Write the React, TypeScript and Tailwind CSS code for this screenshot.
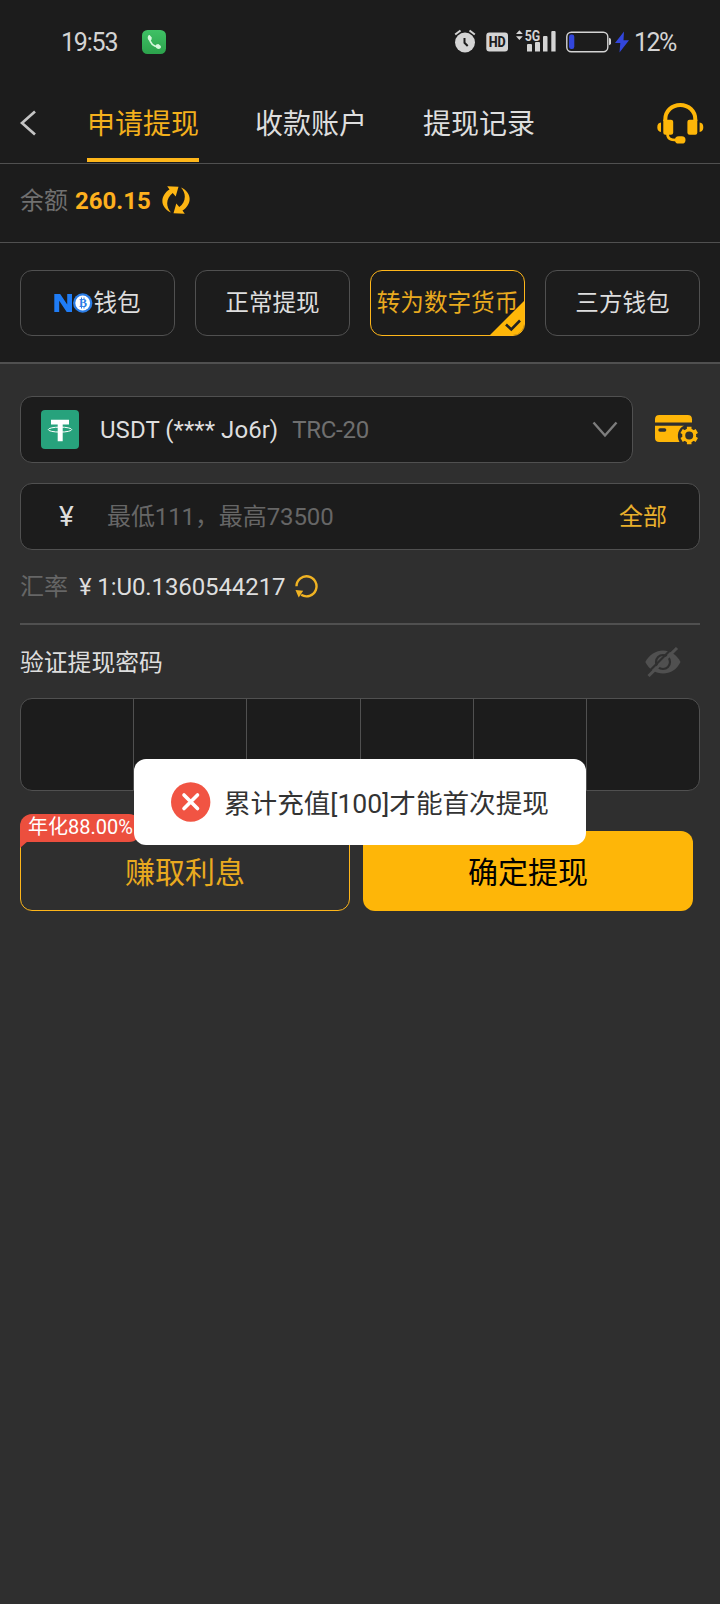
import { useState } from "react";
import clsx from "clsx";

const tabs = ["申请提现", "收款账户", "提现记录"];

const methods = [
  { id: "no", name: "钱包", logo: true },
  { id: "normal", name: "正常提现" },
  { id: "crypto", name: "转为数字货币" },
  { id: "third", name: "三方钱包" },
];

function PhoneBadge() {
  return (
    <svg width="24" height="24" viewBox="0 0 24 24" className="ml-6 mb-px">
      <defs>
        <linearGradient id="phone" x1="0" y1="0" x2="0" y2="1">
          <stop offset="0" stopColor="#3fc165" />
          <stop offset="1" stopColor="#2ca24c" />
        </linearGradient>
      </defs>
      <rect width="24" height="24" rx="5.5" fill="url(#phone)" />
      <path d="M7.5 8C8 13 11.500 16.300 16.500 16.800" stroke="#d5f7dc" strokeWidth="1.700" fill="none" />
      <path
        d="M7.800 5.200l2 2.400-.3 2.200-2.300.9c-1.400-1-1.900-3-1.100-4.600.4-.8 1.100-1.200 1.700-.9z M18.600 15.700l-2.300-1.600-2.100.5-.6 2.300c1.100 1.800 3 2.500 4.500 1.600.9-.7 1.100-2 .5-2.800z"
        fill="#d5f7dc"
      />
    </svg>
  );
}

function StatusIcons() {
  return (
    <svg width="182" height="28" viewBox="0 0 182 28" fill="#d4d4d4" className="ml-auto">
      {/* alarm */}
      <circle cx="11" cy="14.500" r="10" />
      <path d="M1.200 6.500L6.500 2.500M15.500 2.500l5.300 4" stroke="#d4d4d4" strokeWidth="2" fill="none" />
      <path d="M10.500 10v4.800l3.200 3.200" stroke="#1c1c1c" strokeWidth="2" fill="none" />
      {/* hd */}
      <rect x="32.300" y="4.500" width="21.700" height="19" rx="3" />
      <text x="43.200" y="19.300" textAnchor="middle" fontSize="15.500" fontWeight="800" fill="#1c1c1c" textLength="17" lengthAdjust="spacingAndGlyphs" className="font-['Roboto']">
        HD
      </text>
      {/* signal */}
      <path d="M62 6l3.400-3.800L68.800 6zM62 8.300l3.400 3.800 3.400-3.800z" />
      <text x="70.700" y="12.600" fontSize="15" fontWeight="700" textLength="15.500" lengthAdjust="spacingAndGlyphs" className="font-['Roboto']">
        5G
      </text>
      <path d="M73 17q0-1 1-1h3q1 0 1 1v6.500h-5zM81 15q0-1 1-1h3q1 0 1 1v8.500h-5zM89 9q0-1 1-1h2.500q1 0 1 1v14.500H89zM97.300 4q0-1 1-1h2.300q1 0 1 1v19.500h-4.300z" />
      {/* battery */}
      <rect x="112.800" y="4.300" width="41" height="19.500" rx="4.500" fill="none" stroke="#d4d4d4" strokeWidth="1.400" />
      <path d="M155 9.700q2 .5 2 2v3.600q0 1.500-2 2z" />
      <rect x="115" y="6.500" width="5.300" height="14.500" rx="2.200" fill="#3246dc" />
      <path d="M170 3.500L161 15h5.300l-.8 9.500 9.500-12.300h-5.500z" fill="#3246dc" />
    </svg>
  );
}

function HeadsetIcon() {
  return (
    <svg width="47" height="41" viewBox="0 0 47 41" fill="#feb608">
      <path d="M8.300 18v-1.500C8.300 8 15 2 23.300 2s15 6 15 14.500V18" stroke="#feb608" strokeWidth="4" fill="none" />
      <path d="M6.300 16.700H14q2.200 0 2.200 2v11q0 2-2.200 2H8.300q-2 0-2-2zM40.300 16.700h-7.700q-2.200 0-2.200 2v11q0 2 2.200 2h5.700q2 0 2-2z" />
      <path d="M4 19.500v9.400Q.3 28.500.3 24.200T4 19.500zM42.600 19.500v9.400q3.700-.4 3.700-4.700t-3.700-4.700z" />
      <path d="M10.500 30.500c0 5 2.200 6.600 9.500 6.600" stroke="#feb608" strokeWidth="2.700" fill="none" />
      <rect x="18" y="33.200" width="10.500" height="7.300" rx="3.600" />
    </svg>
  );
}

const swapArrow = "M9 26.500C-3 21-1.500 9 7.500 3.500L5.200.2l11.300.6-2.800 9.700-3-3.500C4.500 11.500 3 20 9 26.500z";

function SwapIcon() {
  return (
    <svg width="28" height="28" viewBox="0 0 28 28" fill="#feb613" className="ml-[11px]">
      <path d={swapArrow} />
      <path d={swapArrow} transform="rotate(180 14 14)" />
    </svg>
  );
}

function NoLogo() {
  return (
    <svg width="39" height="20" viewBox="0 0 39 20">
      <path d="M.3 19V1h5.900l7 10.500V1H18v18h-5.300L5.200 7.800V19z" fill="#1f7cf5" />
      <circle cx="28.700" cy="10" r="9.700" fill="#2b7de6" />
      <circle cx="28.700" cy="10" r="7.400" fill="#fff" />
      <text x="28.900" y="14" textAnchor="middle" fontSize="12" fontWeight="700" fill="#2b7de6" className="font-['Liberation_Serif']">
        B
      </text>
      <path d="M27.500 4.500v2M30 4.500v2M27.500 13.500v2M30 13.500v2" stroke="#2b7de6" strokeWidth="1" />
    </svg>
  );
}

function TetherIcon() {
  return (
    <svg width="38" height="39" viewBox="0 0 38 39">
      <rect width="38" height="39" rx="4" fill="#27a27c" />
      <path d="M10 9.700h18v4.900h-6.300v16.700h-5V14.600H10z" fill="#fff" />
      <ellipse cx="19" cy="19.600" rx="11.700" ry="2.500" fill="none" stroke="#fff" strokeWidth="1" />
    </svg>
  );
}

function CardGearIcon() {
  return (
    <svg width="43" height="30" viewBox="0 0 43 30" fill="#feb608">
      <path d="M0 7.500V4.300Q0 0 4.300 0h28.400Q37 0 37 4.300v3.200z" />
      <path d="M0 10.700h29C23.500 13 21 20.500 24.500 27H4.300Q0 27 0 22.700z" />
      <rect x="3.300" y="13.300" width="8" height="3.400" rx="1.700" fill="#2f2f2f" />
      <circle cx="34.200" cy="20.500" r="5.500" fill="none" stroke="#feb608" strokeWidth="3" />
      <path
        d="M34.200 11.700v3.300M34.200 26v3.300M26.600 16.100l2.800 1.650M39 23.250l2.800 1.650M26.600 24.900l2.800-1.650M39 17.750l2.800-1.650"
        stroke="#feb608"
        strokeWidth="4.600"
      />
    </svg>
  );
}

function RefreshIcon() {
  return (
    <svg width="23" height="23" viewBox="0 0 23 23" className="ml-2.5">
      <path d="M1.500 11.300A10 10 0 1 1 6.200 19.800" stroke="#f0b323" strokeWidth="2.400" fill="none" />
      <path d="M.5 15l7.700.8-4.500 6.700z" fill="#f0b323" />
    </svg>
  );
}

function EyeOffIcon() {
  return (
    <svg width="36" height="30" viewBox="0 0 36 30">
      <path d="M.3 15C4.500 7.500 11 3.500 18 3.500S31.500 7.500 35.500 15C31.500 23 25 26.500 18 26.500S4.500 23 .3 15z" fill="#505050" />
      <circle cx="18" cy="15" r="7" fill="none" stroke="#2f2f2f" strokeWidth="2.200" />
      <path d="M1.500 27L28.500 0" stroke="#2f2f2f" strokeWidth="2.200" />
      <path d="M3.500 29L32 1" stroke="#505050" strokeWidth="3" />
    </svg>
  );
}

export default function App() {
  const [activeTab, setActiveTab] = useState(tabs[0]);
  const [method, setMethod] = useState("crypto");

  return (
    <div className="relative flex h-[1604px] w-[720px] flex-col overflow-hidden bg-[#2f2f2f] font-['Roboto','Noto_Sans_CJK_SC',sans-serif] text-2xl text-[#dedede]">
      <header className="bg-[#1c1c1c]">
        <div className="flex h-[84px] items-center pr-[43px] pl-[61px] text-[#d4d4d4]">
          <span className="w-[57px] pt-px text-[25px] tracking-[-1.2px] whitespace-nowrap">19:53</span>
          <PhoneBadge />
          <StatusIcons />
          <span className="-ml-0.5 w-[43px] pt-px text-[25px] tracking-[-1.5px] whitespace-nowrap">12%</span>
        </div>

        <nav className="flex h-20 items-center border-b border-[#505050] pr-4 pl-5">
          <button type="button" aria-label="返回" className="mb-0.5">
            <svg width="16" height="26" viewBox="0 0 16 26" fill="none" stroke="#c4c4c4" strokeWidth="2.700">
              <path d="M15 1.500L2 13l13 11.500" />
            </svg>
          </button>
          <div className="ml-[51px] flex h-full gap-14">
            {tabs.map((tab) => (
              <button
                key={tab}
                type="button"
                onClick={() => setActiveTab(tab)}
                className={clsx(
                  "mb-px flex items-center border-b-4 pt-2 text-[28px]",
                  activeTab === tab ? "border-b-[#feb61a] text-[#f3b01c]" : "border-b-transparent"
                )}
              >
                {tab}
              </button>
            ))}
          </div>
          <button type="button" className="mb-px ml-auto" aria-label="客服">
            <HeadsetIcon />
          </button>
        </nav>

        <div className="flex h-[79px] items-center border-b border-[#505050] px-5 pb-1.5">
          <span className="pt-0.5 text-[#707070]">余额</span>
          <span className="ml-[7px] pt-0.5 font-bold text-[#feb01e]">260.15</span>
          <SwapIcon />
        </div>

        <div className="flex h-[121px] items-center gap-5 border-b-2 border-[#505050] px-5">
          {methods.map((item) => (
            <button
              key={item.id}
              type="button"
              onClick={() => setMethod(item.id)}
              className={clsx(
                "relative flex h-[66px] flex-1 items-center justify-center overflow-hidden rounded-xl border text-[23.6px] whitespace-nowrap",
                method === item.id ? "border-[#feb61a] text-[#e9aa1f]" : "border-[#505050]"
              )}
            >
              {item.logo ? <NoLogo /> : null}
              <span className="pt-[3px]">{item.name}</span>
              {method === item.id ? (
                <svg width="36" height="36" viewBox="0 0 36 36" className="absolute -right-px -bottom-px">
                  <path d="M0 36L36 0v36z" fill="#feb608" />
                  <path d="M17 24.500l5.300 5L31 20.500" fill="none" stroke="#222" strokeWidth="2.600" />
                </svg>
              ) : null}
            </button>
          ))}
        </div>
      </header>

      <main className="flex flex-col px-5 pt-8">
        <div className="flex items-center">
          <div className="flex h-[67px] w-[613px] items-center rounded-xl border border-[#505050] bg-[#1c1c1c] pr-3.5 pl-5">
            <TetherIcon />
            <span className="ml-[21px] pt-px tracking-[0.05px]">USDT (**** Jo6r)</span>
            <span className="ml-3.5 pt-px tracking-[-0.3px] text-[#6f6f6f]">TRC-20</span>
            <svg width="26" height="17" viewBox="0 0 26 17" fill="none" stroke="#7d7d7d" strokeWidth="2.400" className="ml-auto">
              <path d="M1.500 1.500L13 14.500l11.500-13" />
            </svg>
          </div>
          <button type="button" className="ml-[22px]" aria-label="管理账户">
            <CardGearIcon />
          </button>
        </div>

        <div className="mt-5 flex h-[67px] items-center rounded-xl border border-[#505050] bg-[#1c1c1c] pr-8 pl-[38px]">
          <span className="w-12 text-[28px]">¥</span>
          <span className="tracking-[-0.1px] text-[#666]">最低111，最高73500</span>
          <button type="button" className="ml-auto pt-px text-[#e9b02c]">
            全部
          </button>
        </div>

        <div className="mt-1 flex h-[71px] items-center border-b-2 border-[#505050] pb-1 leading-none">
          <span className="text-[#666]">汇率</span>
          <span className="ml-[11px] tracking-[-0.1px]">¥ 1:U0.1360544217</span>
          <RefreshIcon />
        </div>

        <div className="flex h-[73px] items-center justify-between pr-[19px]">
          <span className="pt-1 text-[23.8px]">验证提现密码</span>
          <EyeOffIcon />
        </div>

        <div className="flex h-[93px] divide-x divide-[#505050] overflow-hidden rounded-xl border border-[#505050] bg-[#1c1c1c]">
          {[0, 1, 2, 3, 4, 5].map((cell) => (
            <div key={cell} className="flex-1" />
          ))}
        </div>

        <div className="mt-10 flex gap-[13px] text-[30px]">
          <button type="button" className="relative h-20 w-[330px] rounded-xl border border-[#feb61a] pt-1 text-[#e9aa1f]">
            赚取利息
            <span className="absolute -top-[18px] -left-px flex h-7 items-center rounded-t-xl rounded-br-xl bg-[#ec4f3e] px-2 pb-0.5 text-xl text-white">
              年化88.00%
              <svg width="8" height="7" viewBox="0 0 8 7" className="absolute top-[27px] left-0">
                <path d="M0 0h8L0 7z" fill="#ec4f3e" />
              </svg>
            </span>
          </button>
          <button type="button" className="h-20 w-[330px] rounded-xl bg-[#feb608] pt-1 text-black">
            确定提现
          </button>
        </div>
      </main>

      {/* toast */}
      <div className="absolute top-[759px] left-[134px] flex h-[86px] w-[452px] items-center rounded-xl bg-white pl-[37px] text-[26.6px] whitespace-nowrap text-[#333]">
        <svg width="40" height="40" viewBox="0 0 40 40" className="mr-[13px]">
          <circle cx="19.700" cy="20" r="19.700" fill="#f15443" />
          <path d="M13 13l13.500 13.500M26.500 13L13 26.500" stroke="#fff" strokeWidth="3.600" strokeLinecap="round" />
        </svg>
        <span className="pt-1">累计充值[100]才能首次提现</span>
      </div>
    </div>
  );
}
